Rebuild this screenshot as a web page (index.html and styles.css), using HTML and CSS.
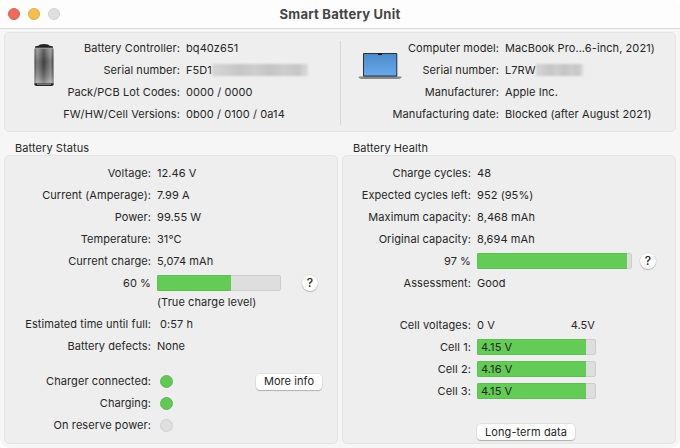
FILE: index.html
```html
<!DOCTYPE html>
<html>

	<head>
		<meta charset="utf-8" />
		<title>Smart Battery Unit</title>
		<link rel="stylesheet" href="styles.css">
	</head>

	<body>
		<div class="window">
			<div class="titlebar">
				<div class="lights">
					<span class="light close"></span>
					<span class="light minimize"></span>
					<span class="light zoom"></span>
				</div>
				<h1>Smart Battery Unit</h1>
			</div>

			<div class="panel summary">
				<div class="half controller">
					<svg class="cell-icon" width="22" height="44" viewBox="0 0 22 44">
						<defs>
							<linearGradient id="metal" x1="0" x2="1" y1="0" y2="0">
								<stop offset="0" stop-color="#4a4a4a" />
								<stop offset=".12" stop-color="#969696" />
								<stop offset=".3" stop-color="#777" />
								<stop offset=".48" stop-color="#4c4c4c" />
								<stop offset=".65" stop-color="#707070" />
								<stop offset=".85" stop-color="#999" />
								<stop offset="1" stop-color="#4a4a4a" />
							</linearGradient>
							<linearGradient id="shine" x1="0" x2="0" y1="0" y2="1">
								<stop offset="0" stop-color="#fff" stop-opacity=".12" />
								<stop offset=".35" stop-color="#000" stop-opacity=".15" />
								<stop offset="1" stop-color="#fff" stop-opacity=".42" />
							</linearGradient>
						</defs>
						<path d="M6 2.6Q6 1 11 1T16 2.6L20 3.6V6H2V3.6Z" fill="#222" />
						<rect x="1.5" y="5.5" width="19" height="36" fill="url(#metal)" />
						<rect x="1.5" y="5.5" width="19" height="36" fill="url(#shine)" />
						<path d="M2 5.2H20" stroke="#ccc" stroke-width=".8" />
						<path d="M1.5 40.2H20.5V42Q20 43 18 43H4Q2 43 1.5 42Z" fill="#222" />
						<path d="M4 41.2H18" stroke="#bbb" stroke-width=".8" />
					</svg>
					<div class="rows">
						<div class="row"><span class="label">Battery Controller:</span><span>bq40z651</span></div>
						<div class="row"><span class="label">Serial number:</span><span class="serial">F5D1<i class="mask mask-long"></i></span></div>
						<div class="row"><span class="label">Pack/PCB Lot Codes:</span><span>0000 / 0000</span></div>
						<div class="row"><span class="label">FW/HW/Cell Versions:</span><span>0b00 / 0100 / 0a14</span></div>
					</div>
				</div>
				<div class="half computer">
					<svg class="laptop-icon" width="44" height="28" viewBox="0 0 44 28">
						<defs>
							<linearGradient id="screen" x1="0" x2="0" y1="0" y2="1">
								<stop offset="0" stop-color="#4b8acb" />
								<stop offset="1" stop-color="#69a8e9" />
							</linearGradient>
						</defs>
						<rect x="5" y="1" width="34.3" height="24" rx="1" fill="#26323e" />
						<rect x="6" y="2" width="32.3" height="21.5" fill="url(#screen)" />
						<rect x="20" y="1.5" width="4" height="1.5" fill="#111" />
						<path d="M.7 24.6H43.5V25.4Q42.5 27 40 27H4Q1.5 27 .7 25.4Z" fill="#858b8b" />
					</svg>
					<div class="rows">
						<div class="row"><span class="label">Computer model:</span><span>MacBook Pro...6-inch, 2021)</span></div>
						<div class="row"><span class="label">Serial number:</span><span class="serial">L7RW<i class="mask mask-short"></i></span></div>
						<div class="row"><span class="label">Manufacturer:</span><span>Apple Inc.</span></div>
						<div class="row"><span class="label">Manufacturing date:</span><span>Blocked (after August 2021)</span></div>
					</div>
				</div>
			</div>

			<div class="columns">
				<div class="group">
					<h2>Battery Status</h2>
					<div class="panel details status">
						<div class="row"><span class="label">Voltage:</span><span>12.46 V</span></div>
						<div class="row"><span class="label">Current (Amperage):</span><span>7.99 A</span></div>
						<div class="row"><span class="label">Power:</span><span>99.55 W</span></div>
						<div class="row"><span class="label">Temperature:</span><span>31°C</span></div>
						<div class="row"><span class="label">Current charge:</span><span>5,074 mAh</span></div>
						<div class="row">
							<span class="label">60 %</span>
							<div class="bar charge"><div class="fill" style="width: 60%"></div></div>
							<button class="help">?</button>
						</div>
						<div class="row note"><span class="label"></span><span>(True charge level)</span></div>
						<div class="row"><span class="label">Estimated time until full:</span><span class="time">0:57 h</span></div>
						<div class="row"><span class="label">Battery defects:</span><span>None</span></div>
						<div class="row gap"><span class="label">Charger connected:</span><span class="led on"></span><button class="more">More info</button></div>
						<div class="row"><span class="label">Charging:</span><span class="led on"></span></div>
						<div class="row"><span class="label">On reserve power:</span><span class="led"></span></div>
					</div>
				</div>

				<div class="group">
					<h2>Battery Health</h2>
					<div class="panel details health">
						<div class="row"><span class="label">Charge cycles:</span><span>48</span></div>
						<div class="row"><span class="label">Expected cycles left:</span><span>952 (95%)</span></div>
						<div class="row"><span class="label">Maximum capacity:</span><span>8,468 mAh</span></div>
						<div class="row"><span class="label">Original capacity:</span><span>8,694 mAh</span></div>
						<div class="row">
							<span class="label">97 %</span>
							<div class="bar capacity"><div class="fill" style="width: 97.4%"></div></div>
							<button class="help">?</button>
						</div>
						<div class="row"><span class="label">Assessment:</span><span>Good</span></div>
						<div class="row scale-row"><span class="label">Cell voltages:</span><div class="scale"><span>0 V</span><span>4.5V</span></div></div>
						<div class="row"><span class="label">Cell 1:</span><div class="bar cell"><div class="fill" style="width: 92.2%">4.15 V</div></div></div>
						<div class="row"><span class="label">Cell 2:</span><div class="bar cell"><div class="fill" style="width: 92.4%">4.16 V</div></div></div>
						<div class="row"><span class="label">Cell 3:</span><div class="bar cell"><div class="fill" style="width: 92.2%">4.15 V</div></div></div>
						<button class="long-term">Long-term data</button>
					</div>
				</div>
			</div>
		</div>
	</body>

</html>
```
FILE: styles.css
```css
* {
	box-sizing: border-box;
}

body {
	margin: 0;
	background: #fff;
	color: #262626;
	font: 11px/22px Inter, "Liberation Sans", sans-serif;
	letter-spacing: 0.08px;
}

.window {
	width: 680px;
	height: 448px;
	background: #f6f6f6;
	border-radius: 10px;
	overflow: hidden;
}

.titlebar {
	height: 29px;
	display: grid;
	grid-template-columns: 60px 1fr 60px;
	align-items: center;
	background: #fdfdfd;
	border-bottom: 1px solid #dbdbdb;
}

.lights {
	display: flex;
	gap: 8px;
	padding-left: 8px;
}

.light {
	width: 12px;
	height: 12px;
	border-radius: 50%;
	border: 1px solid #d1d1d1;
	background: #dfdfdf;
}

.close {
	background: #ed6a5e;
	border-color: #df5d51;
}

.minimize {
	background: #f4bf4f;
	border-color: #e0ad43;
}

h1 {
	margin: 0;
	text-align: center;
	font-size: 13px;
	font-weight: 700;
	line-height: 20px;
	padding-bottom: 1px;
	letter-spacing: 0.25px;
	color: #454545;
}

.panel {
	background: #eee;
	border: 1px solid #e4e4e4;
	border-radius: 5px;
}

.summary {
	display: flex;
	height: 100px;
	margin: 3px 4px 0;
	padding-top: 4px;
}

.half {
	display: flex;
	flex: none;
	width: 336px;
}

.row {
	display: flex;
	align-items: center;
	height: 22px;
	white-space: nowrap;
}

.label {
	flex: none;
	text-align: right;
	margin-right: 6px;
}

.controller .rows {
	margin-left: -24px;
}

.cell-icon {
	flex: none;
	margin: 6px 0 0 28px;
}

.controller .label {
	width: 149px;
}

.computer {
	position: relative;
}

.computer::before {
	content: "";
	position: absolute;
	left: -1px;
	top: 4px;
	width: 1px;
	height: 84px;
	background: #d6d6d6;
}

.laptop-icon {
	flex: none;
	margin: 15px 0 0 17px;
}

.computer .rows {
	margin-left: -20px;
}

.computer .label {
	width: 117px;
}

.serial {
	display: flex;
	align-items: center;
}

/* blurred out part of the serial numbers */
.mask {
	height: 12px;
	background: linear-gradient(90deg, #d6d6d6, #c6c6c6 30%, #cecece 45%, #c4c4c4 60%, #cdcdcd 75%, #c6c6c6 90%, #ddd);
	filter: blur(1px);
}

.mask-long {
	width: 96px;
}

.mask-short {
	width: 47px;
}

.columns {
	display: flex;
	gap: 4px;
	padding: 9px 4px 0;
}

.group {
	width: 334px;
}

h2 {
	margin: 0;
	padding-left: 11px;
	height: 14px;
	font-size: 11px;
	font-weight: 400;
	line-height: 14px;
}

.details {
	height: 289px;
	padding-top: 6px;
}

.status .label {
	width: 146px;
}

.health .label {
	width: 128px;
}

.status .note {
	height: 16px;
	margin-bottom: 3px;
}

.time {
	padding-left: 3px;
}

.status .gap {
	margin-top: 13px;
}

.bar {
	height: 16px;
	background: #dedede;
	border: 1px solid #cdcdcd;
	border-radius: 2px;
}

.fill {
	height: 16px;
	margin: -1px;
	background: #63cb56;
	border: 1px solid #5bc04f;
	border-right: 0;
	border-radius: 2px 0 0 2px;
	box-shadow: 1px 0 0 #63cb56;
	line-height: 14px;
	padding-left: 3px;
}

.charge {
	width: 124px;
}

.capacity {
	width: 155px;
}

.cell {
	width: 119px;
}

.scale {
	display: flex;
	justify-content: space-between;
	width: 118px;
}

.health .scale-row {
	margin-top: 20px;
}

button {
	padding: 0;
	border: 0;
	background: #fff;
	color: inherit;
	font: inherit;
	letter-spacing: inherit;
	box-shadow: 0 0 0 0.5px rgba(0, 0, 0, 0.1), 0 1px 1px rgba(0, 0, 0, 0.22);
}

.help {
	width: 16px;
	height: 16px;
	border-radius: 50%;
	font-size: 12px;
	font-weight: 500;
	line-height: 16px;
}

.status .help {
	margin-left: 21px;
}

.health .help {
	margin-left: 8px;
}

.more {
	width: 66px;
	height: 16px;
	margin: 1px 0 0 83px;
	border-radius: 4px;
	line-height: 15px;
}

.long-term {
	display: block;
	width: 98px;
	height: 16px;
	margin: 22px 0 0 134px;
	border-radius: 4px;
	line-height: 15px;
}

.led {
	width: 13px;
	height: 13px;
	margin-left: 3px;
	border-radius: 50%;
	background: #dfdfdf;
	border: 1px solid #cfcfcf;
}

.led.on {
	background: #63c756;
	border-color: #5dbc51;
}
```
